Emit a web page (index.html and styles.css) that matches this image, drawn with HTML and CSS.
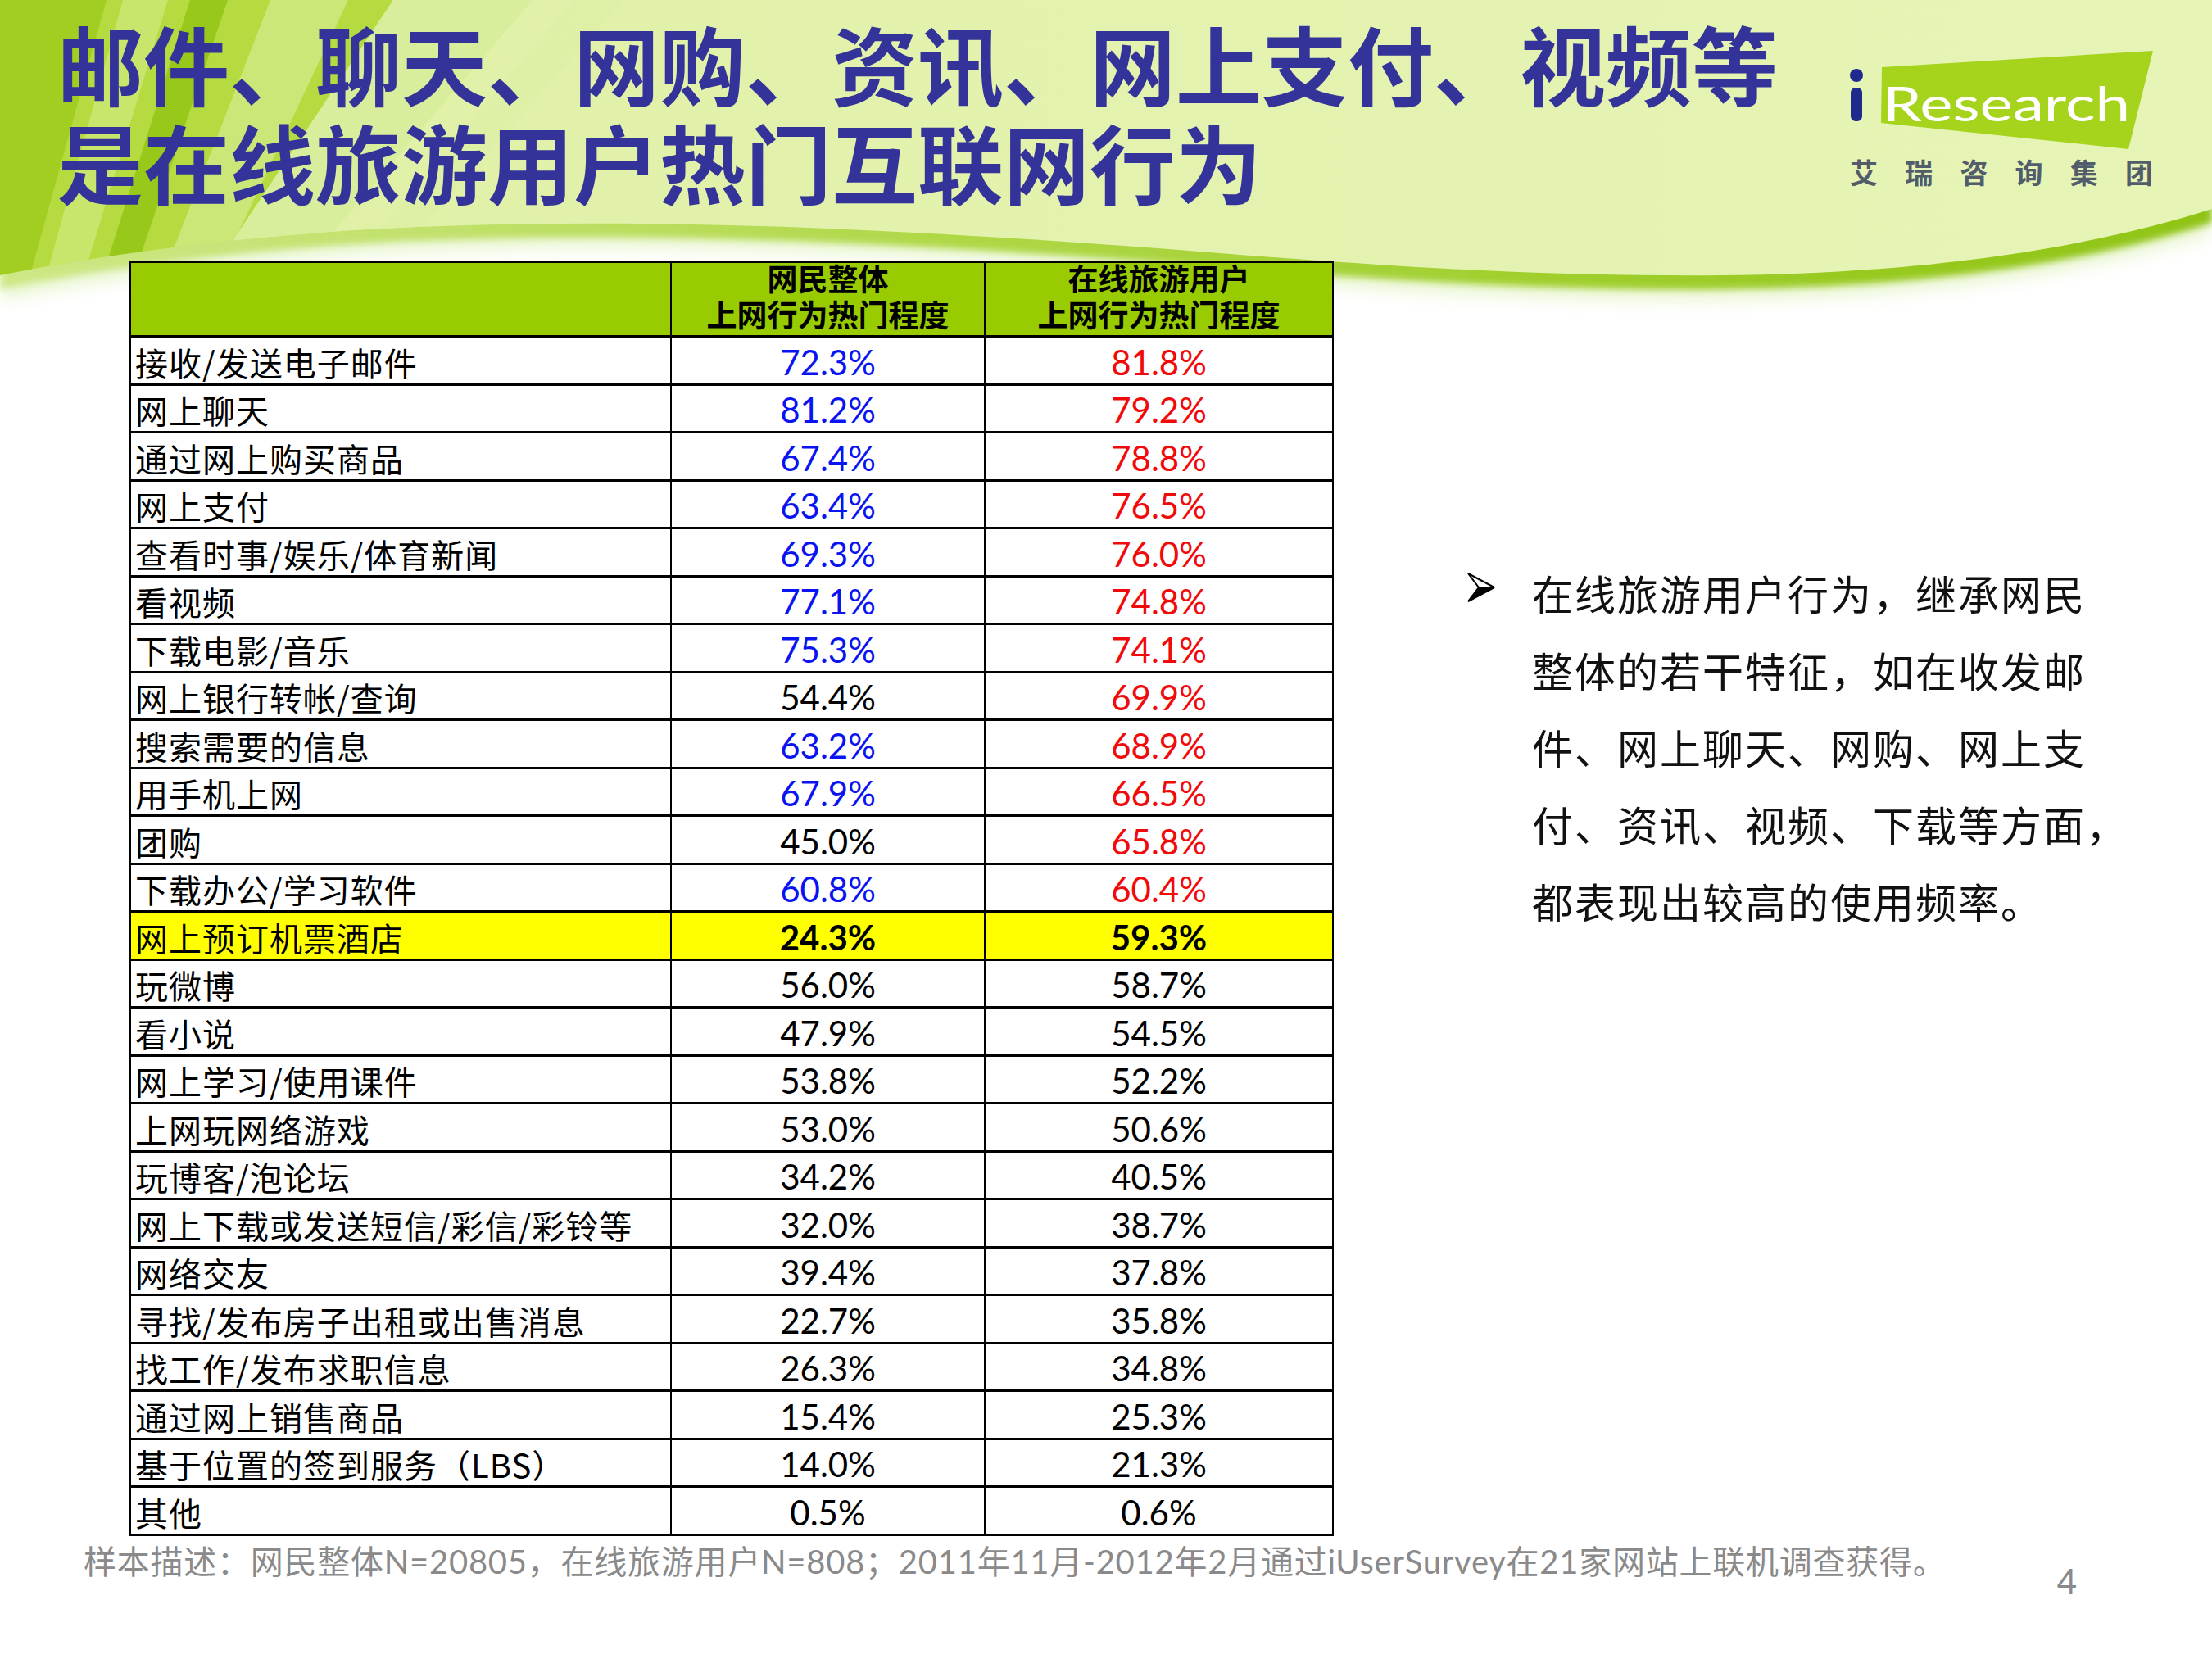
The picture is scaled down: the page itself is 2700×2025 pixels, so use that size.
FILE: index.html
```html
<!DOCTYPE html>
<html lang="zh-CN">
<head>
<meta charset="utf-8">
<title>在线旅游用户热门互联网行为</title>
<link rel="stylesheet" href="styles.css">
</head>
<body>
<div class="slide">
  <svg class="bg" width="2700" height="420" viewBox="0 0 2700 420" aria-hidden="true">
    <defs>
      <clipPath id="lightClip">
        <path d="M0,0 H2700 V255 C2560,300 2360,334 2100,336 C1860,338 1650,322 1400,302 C1100,280 760,262 450,280 C280,290 120,312 0,336 Z"/>
      </clipPath>
      <linearGradient id="bandGrad" x1="0" y1="0" x2="1" y2="0">
        <stop offset="0" stop-color="#b7dc4a" stop-opacity="0.55"/>
        <stop offset="0.45" stop-color="#a3d12a" stop-opacity="0.85"/>
        <stop offset="1" stop-color="#8fc412" stop-opacity="1"/>
      </linearGradient>
      <linearGradient id="lightGrad" x1="0" y1="0" x2="1" y2="0">
        <stop offset="0" stop-color="#dff0a4"/>
        <stop offset="0.5" stop-color="#e3f2ae"/>
        <stop offset="1" stop-color="#e6f4b6"/>
      </linearGradient>
      <filter id="soft" x="-5%" y="-20%" width="110%" height="140%">
        <feGaussianBlur stdDeviation="4"/>
      </filter>
      <filter id="soft2" x="-5%" y="-20%" width="110%" height="160%">
        <feGaussianBlur stdDeviation="10"/>
      </filter>
    </defs>
    <path d="M0,0 H2700 V285 C2560,330 2360,364 2100,366 C1860,368 1650,352 1400,332 C1100,310 760,292 450,310 C280,320 120,342 0,366 Z" fill="#d9efb0" opacity="0.6" filter="url(#soft2)"/>
    <path d="M0,0 H2700 V272 C2560,317 2360,351 2100,353 C1860,355 1650,339 1400,319 C1100,297 760,279 450,297 C280,307 120,329 0,353 Z" fill="url(#bandGrad)" filter="url(#soft)"/>
    <path d="M0,0 H2700 V255 C2560,300 2360,334 2100,336 C1860,338 1650,322 1400,302 C1100,280 760,262 450,280 C280,290 120,312 0,336 Z" fill="url(#lightGrad)"/>
    <g clip-path="url(#lightClip)">
      <polygon points="0,0 480,0 240,360 0,360" fill="#b6db40"/>
      <polygon points="0,0 130,0 30,360 0,360" fill="#a2ce22"/>
      <polygon points="150,0 205,0 95,360 50,360" fill="#c8e56c"/>
      <polygon points="232,0 278,0 155,360 118,360" fill="#98c81a"/>
      <polygon points="330,0 425,0 255,360 190,360" fill="#cfe983" opacity="0.85"/>
      <polygon points="480,0 650,0 340,360 240,360" fill="#d6ed97" opacity="0.7"/>
      <polygon points="700,0 760,0 470,330 420,330" fill="#dcefa2" opacity="0.5"/>
    </g>
  </svg>

  <header class="top">
    <h1 class="title">邮件、聊天、网购、资讯、网上支付、视频等<br>是在线旅游用户热门互联网行为</h1>
    <svg class="logo" width="390" height="180" viewBox="0 0 390 180" role="img" aria-label="iResearch 艾瑞咨询集团">
      <polygon points="47,27 378,7 348,127 46,95" fill="#a6d41c"/>
      <circle cx="16" cy="37" r="8" fill="#1e2a8c"/>
      <rect x="9" y="52" width="14" height="41" rx="6" fill="#1e2a8c"/>
      <text class="logo-en" x="48" y="93" textLength="302" lengthAdjust="spacingAndGlyphs">Research</text>
      <text class="logo-cn" x="8" y="169" textLength="370" lengthAdjust="spacing">艾瑞咨询集团</text>
    </svg>
  </header>

  <main class="content">
    <table class="data">
      <colgroup>
        <col class="c1"><col class="c2"><col class="c3">
      </colgroup>
      <thead>
        <tr class="head">
          <th></th>
          <th>网民整体<br>上网行为热门程度</th>
          <th>在线旅游用户<br>上网行为热门程度</th>
        </tr>
      </thead>
      <tbody>
        <tr><td class="lbl">接收/发送电子邮件</td><td class="num blue">72.3%</td><td class="num red">81.8%</td></tr>
        <tr><td class="lbl">网上聊天</td><td class="num blue">81.2%</td><td class="num red">79.2%</td></tr>
        <tr><td class="lbl">通过网上购买商品</td><td class="num blue">67.4%</td><td class="num red">78.8%</td></tr>
        <tr><td class="lbl">网上支付</td><td class="num blue">63.4%</td><td class="num red">76.5%</td></tr>
        <tr><td class="lbl">查看时事/娱乐/体育新闻</td><td class="num blue">69.3%</td><td class="num red">76.0%</td></tr>
        <tr><td class="lbl">看视频</td><td class="num blue">77.1%</td><td class="num red">74.8%</td></tr>
        <tr><td class="lbl">下载电影/音乐</td><td class="num blue">75.3%</td><td class="num red">74.1%</td></tr>
        <tr><td class="lbl">网上银行转帐/查询</td><td class="num">54.4%</td><td class="num red">69.9%</td></tr>
        <tr><td class="lbl">搜索需要的信息</td><td class="num blue">63.2%</td><td class="num red">68.9%</td></tr>
        <tr><td class="lbl">用手机上网</td><td class="num blue">67.9%</td><td class="num red">66.5%</td></tr>
        <tr><td class="lbl">团购</td><td class="num">45.0%</td><td class="num red">65.8%</td></tr>
        <tr><td class="lbl">下载办公/学习软件</td><td class="num blue">60.8%</td><td class="num red">60.4%</td></tr>
        <tr class="hl"><td class="lbl">网上预订机票酒店</td><td class="num strong">24.3%</td><td class="num strong">59.3%</td></tr>
        <tr><td class="lbl">玩微博</td><td class="num">56.0%</td><td class="num">58.7%</td></tr>
        <tr><td class="lbl">看小说</td><td class="num">47.9%</td><td class="num">54.5%</td></tr>
        <tr><td class="lbl">网上学习/使用课件</td><td class="num">53.8%</td><td class="num">52.2%</td></tr>
        <tr><td class="lbl">上网玩网络游戏</td><td class="num">53.0%</td><td class="num">50.6%</td></tr>
        <tr><td class="lbl">玩博客/泡论坛</td><td class="num">34.2%</td><td class="num">40.5%</td></tr>
        <tr><td class="lbl">网上下载或发送短信/彩信/彩铃等</td><td class="num">32.0%</td><td class="num">38.7%</td></tr>
        <tr><td class="lbl">网络交友</td><td class="num">39.4%</td><td class="num">37.8%</td></tr>
        <tr><td class="lbl">寻找/发布房子出租或出售消息</td><td class="num">22.7%</td><td class="num">35.8%</td></tr>
        <tr><td class="lbl">找工作/发布求职信息</td><td class="num">26.3%</td><td class="num">34.8%</td></tr>
        <tr><td class="lbl">通过网上销售商品</td><td class="num">15.4%</td><td class="num">25.3%</td></tr>
        <tr><td class="lbl">基于位置的签到服务（LBS）</td><td class="num">14.0%</td><td class="num">21.3%</td></tr>
        <tr><td class="lbl">其他</td><td class="num">0.5%</td><td class="num">0.6%</td></tr>
      </tbody>
    </table>

    <aside class="notes">
      <svg class="bullet" width="36" height="38" viewBox="0 0 36 38" aria-hidden="true">
        <polygon points="2,2 34,19 15,19" fill="#ffffff" stroke="#000" stroke-width="2" stroke-linejoin="miter"/>
        <polygon points="15,19 34,19 2,36" fill="#000" stroke="#000" stroke-width="2" stroke-linejoin="miter"/>
      </svg>
      <p class="note-text">在线旅游用户行为，继承网民<br>整体的若干特征，如在收发邮<br>件、网上聊天、网购、网上支<br>付、资讯、视频、下载等方面，<br>都表现出较高的使用频率。</p>
    </aside>
  </main>

  <footer class="foot">
    <p class="source">样本描述：网民整体N=20805，在线旅游用户N=808；2011年11月-2012年2月通过iUserSurvey在21家网站上联机调查获得。</p>
    <span class="page">4</span>
  </footer>
</div>
</body>
</html>
```

FILE: styles.css
```css
html, body {
  margin: 0;
  padding: 0;
  background: #ffffff;
}

.slide {
  position: relative;
  width: 2700px;
  height: 2025px;
  overflow: hidden;
  background: #ffffff;
  font-family: "Liberation Sans", "Noto Sans CJK SC", sans-serif;
}

.bg {
  position: absolute;
  top: 0;
  left: 0;
  z-index: 0;
  display: block;
}

.top {
  position: relative;
  z-index: 1;
  display: flex;
  align-items: flex-start;
  height: 318px;
  box-sizing: border-box;
  padding: 25px 0 0 70px;
}

.title {
  margin: 0;
  font-family: "Liberation Sans", "Noto Sans CJK SC", sans-serif;
  font-size: 105px;
  line-height: 120px;
  font-weight: 700;
  color: #333399;
  white-space: nowrap;
  letter-spacing: 0;
}

.logo {
  display: block;
  margin: 30px 60px 0 auto;
  flex: none;
}

.logo-en {
  font-family: "Lato", "Liberation Sans", sans-serif;
  font-size: 58px;
  font-weight: 400;
  fill: #ffffff;
}

.logo-cn {
  font-family: "Noto Sans CJK SC", sans-serif;
  font-size: 34px;
  font-weight: 700;
  fill: #525c6a;
}

.content {
  position: relative;
  z-index: 1;
  display: flex;
  align-items: flex-start;
  padding-left: 158px;
}

.data {
  border-collapse: collapse;
  width: 1468px;
  table-layout: fixed;
  flex: none;
}

.c1 { width: 660px; }
.c2 { width: 383px; }
.c3 { width: 425px; }

.data th,
.data td {
  border-left: 2px solid #000;
  border-right: 2px solid #000;
  border-top: 3px solid #000;
  border-bottom: 3px solid #000;
  padding: 0;
}

.head {
  height: 91px;
  background: #99cc00;
}

.head th {
  font-family: "Liberation Sans", "Noto Sans CJK SC", sans-serif;
  font-size: 37px;
  line-height: 44px;
  font-weight: 700;
  color: #000;
  text-align: center;
  vertical-align: middle;
}

.data tbody tr {
  height: 58.5px;
}

.lbl {
  font-family: "Noto Sans CJK SC", sans-serif;
  font-size: 40px;
  line-height: 50px;
  color: #000;
  padding: 4px 0 0 5px !important;
  white-space: nowrap;
  letter-spacing: 1px;
  vertical-align: middle;
}

.num {
  font-family: "Lato", "Liberation Sans", sans-serif;
  font-size: 42px;
  line-height: 50px;
  color: #000;
  text-align: center;
  vertical-align: middle;
  padding-top: 4px !important;
}

.num.blue { color: #0a14f0; }
.num.red { color: #f00a0a; }
.num.strong { font-weight: 700; }

.hl { background: #ffff00; }

.notes {
  display: flex;
  align-items: flex-start;
  margin-left: 162px;
  padding-top: 358px;
}

.bullet {
  display: block;
  flex: none;
  margin: 22px 44px 0 0;
}

.note-text {
  margin: 0;
  font-family: "Noto Sans CJK SC", sans-serif;
  font-size: 50px;
  line-height: 94px;
  letter-spacing: 2px;
  color: #111;
  white-space: nowrap;
}

.foot {
  position: relative;
  z-index: 1;
  display: flex;
  align-items: flex-start;
  margin-top: 7px;
}

.source {
  margin: 0;
  padding-left: 102px;
  font-family: "Lato", "Noto Sans CJK SC", sans-serif;
  font-size: 40px;
  line-height: 48px;
  letter-spacing: 0.75px;
  color: #8a8a8a;
  white-space: nowrap;
}

.page {
  margin: 24px 165px 0 auto;
  font-family: "Lato", sans-serif;
  font-size: 42px;
  line-height: 48px;
  color: #8a8a8a;
}
```
